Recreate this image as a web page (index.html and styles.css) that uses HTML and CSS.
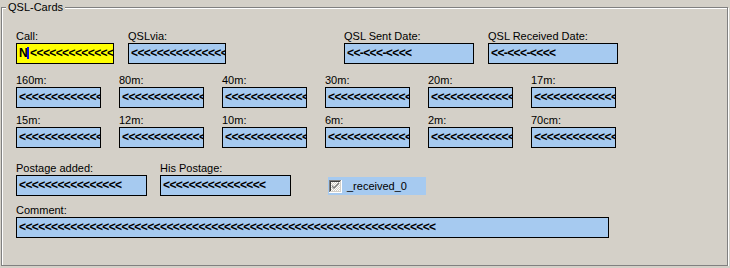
FILE: index.html
```html
<!DOCTYPE html>
<html lang="en">
<head>
    <meta charset="UTF-8">
    <title>QSL-Cards</title>
    <link rel="stylesheet" href="styles.css">
</head>
<body>
    <div class="group">
        <span class="legend">QSL-Cards</span>

        <div class="row">
            <div class="field w-call">
                <label>Call:</label>
                <div class="box yellow">N<span class="caret"></span>&lt;&lt;&lt;&lt;&lt;&lt;&lt;&lt;&lt;&lt;&lt;&lt;&lt;&lt;</div>
            </div>
            <div class="field w-call">
                <label>QSLvia:</label>
                <div class="box">&lt;&lt;&lt;&lt;&lt;&lt;&lt;&lt;&lt;&lt;&lt;&lt;&lt;&lt;&lt;</div>
            </div>
            <div class="field w-date push">
                <label>QSL Sent Date:</label>
                <div class="box">&lt;&lt;-&lt;&lt;&lt;-&lt;&lt;&lt;&lt;</div>
            </div>
            <div class="field w-date">
                <label>QSL Received Date:</label>
                <div class="box">&lt;&lt;-&lt;&lt;&lt;-&lt;&lt;&lt;&lt;</div>
            </div>
        </div>

        <div class="row bands first">
            <div class="field w-band"><label>160m:</label><div class="box">&lt;&lt;&lt;&lt;&lt;&lt;&lt;&lt;&lt;&lt;&lt;&lt;&lt;</div></div>
            <div class="field w-band"><label>80m:</label><div class="box">&lt;&lt;&lt;&lt;&lt;&lt;&lt;&lt;&lt;&lt;&lt;&lt;&lt;</div></div>
            <div class="field w-band"><label>40m:</label><div class="box">&lt;&lt;&lt;&lt;&lt;&lt;&lt;&lt;&lt;&lt;&lt;&lt;&lt;</div></div>
            <div class="field w-band"><label>30m:</label><div class="box">&lt;&lt;&lt;&lt;&lt;&lt;&lt;&lt;&lt;&lt;&lt;&lt;&lt;</div></div>
            <div class="field w-band"><label>20m:</label><div class="box">&lt;&lt;&lt;&lt;&lt;&lt;&lt;&lt;&lt;&lt;&lt;&lt;&lt;</div></div>
            <div class="field w-band"><label>17m:</label><div class="box">&lt;&lt;&lt;&lt;&lt;&lt;&lt;&lt;&lt;&lt;&lt;&lt;&lt;</div></div>
        </div>

        <div class="row bands">
            <div class="field w-band"><label>15m:</label><div class="box">&lt;&lt;&lt;&lt;&lt;&lt;&lt;&lt;&lt;&lt;&lt;&lt;&lt;</div></div>
            <div class="field w-band"><label>12m:</label><div class="box">&lt;&lt;&lt;&lt;&lt;&lt;&lt;&lt;&lt;&lt;&lt;&lt;&lt;</div></div>
            <div class="field w-band"><label>10m:</label><div class="box">&lt;&lt;&lt;&lt;&lt;&lt;&lt;&lt;&lt;&lt;&lt;&lt;&lt;</div></div>
            <div class="field w-band"><label>6m:</label><div class="box">&lt;&lt;&lt;&lt;&lt;&lt;&lt;&lt;&lt;&lt;&lt;&lt;&lt;</div></div>
            <div class="field w-band"><label>2m:</label><div class="box">&lt;&lt;&lt;&lt;&lt;&lt;&lt;&lt;&lt;&lt;&lt;&lt;&lt;</div></div>
            <div class="field w-band"><label>70cm:</label><div class="box">&lt;&lt;&lt;&lt;&lt;&lt;&lt;&lt;&lt;&lt;&lt;&lt;&lt;</div></div>
        </div>

        <div class="row postage">
            <div class="field w-post">
                <label>Postage added:</label>
                <div class="box">&lt;&lt;&lt;&lt;&lt;&lt;&lt;&lt;&lt;&lt;&lt;&lt;&lt;&lt;&lt;&lt;</div>
            </div>
            <div class="field w-post">
                <label>His Postage:</label>
                <div class="box">&lt;&lt;&lt;&lt;&lt;&lt;&lt;&lt;&lt;&lt;&lt;&lt;&lt;&lt;&lt;&lt;</div>
            </div>
            <div class="check">
                <svg width="13" height="13" viewBox="0 0 13 13">
                    <defs>
                        <pattern id="dots" width="2" height="2" patternUnits="userSpaceOnUse">
                            <rect width="2" height="2" fill="#d4d0c8"/>
                            <rect width="1" height="1" fill="#ffffff"/>
                            <rect x="1" y="1" width="1" height="1" fill="#ffffff"/>
                        </pattern>
                    </defs>
                    <rect x="0" y="0" width="13" height="13" fill="#ffffff"/>
                    <rect x="0" y="0" width="12" height="12" fill="#808080"/>
                    <rect x="1" y="1" width="11" height="11" fill="#d4d0c8"/>
                    <rect x="1" y="1" width="10" height="10" fill="#404040"/>
                    <rect x="2" y="2" width="9" height="9" fill="url(#dots)"/>
                    <path d="M3 5 L3 7 L5 9 L10 4 L10 2 L5 7 Z" fill="#808080"/>
                </svg>
                <span>_received_0</span>
            </div>
        </div>

        <div class="row comment">
            <div class="field w-comment">
                <label>Comment:</label>
                <div class="box">&lt;&lt;&lt;&lt;&lt;&lt;&lt;&lt;&lt;&lt;&lt;&lt;&lt;&lt;&lt;&lt;&lt;&lt;&lt;&lt;&lt;&lt;&lt;&lt;&lt;&lt;&lt;&lt;&lt;&lt;&lt;&lt;&lt;&lt;&lt;&lt;&lt;&lt;&lt;&lt;&lt;&lt;&lt;&lt;&lt;&lt;&lt;&lt;&lt;&lt;&lt;&lt;&lt;&lt;&lt;&lt;&lt;&lt;&lt;&lt;&lt;&lt;&lt;&lt;&lt;</div>
            </div>
        </div>
    </div>
</body>
</html>
```

FILE: styles.css
```css
/* base */
* {
    box-sizing: border-box;
    margin: 0;
    padding: 0;
}

body {
    background-color: #d4d0c8;
    color: #000;
    font-family: 'Liberation Sans', Arial, sans-serif;
    font-size: 11px;
    line-height: 13px;
}

/* etched group box */
.group {
    position: relative;
    margin: 7px 0 0 1px;
    width: 727px;
    height: 259px;
    border: 1px solid #808080;
    box-shadow: inset 1px 1px 0 #fff, 1px 1px 0 #fff;
    padding: 22px 0 0 14px;
}

.legend {
    position: absolute;
    top: -7px;
    left: 4px;
    padding: 0 2px;
    background-color: #d4d0c8;
}

.row {
    display: flex;
    gap: 14px;
}

.field label {
    display: block;
    height: 13px;
}

.box {
    height: 21px;
    border: 1px solid #000;
    background-color: #a6caf0;
    padding-left: 2px;
    font-size: 12px;
    font-weight: bold;
    letter-spacing: -0.6px;
    line-height: 19px;
    white-space: nowrap;
    overflow: hidden;
}

.box.yellow {
    background-color: #ffff00;
}

.caret {
    display: inline-block;
    width: 2px;
    height: 12px;
    margin-right: 1px;
    background-color: #1010e0;
    vertical-align: -2px;
}

.w-call { width: 98px; }
.w-date { width: 130px; }
.w-band { width: 85px; }
.w-post { width: 131px; }
.w-comment { width: 593px; }

.push {
    margin-left: 104px;
}

.bands {
    gap: 18px;
}

.bands.first {
    margin-top: 10px;
}

.bands + .bands {
    margin-top: 6px;
}

.postage {
    margin-top: 14px;
    gap: 13px;
    align-items: flex-end;
}

.check {
    display: flex;
    align-items: center;
    gap: 5px;
    width: 98px;
    height: 18px;
    margin: 0 0 1px 24px;
    padding-left: 1px;
    background-color: #a6caf0;
}

.comment {
    margin-top: 8px;
}
```
